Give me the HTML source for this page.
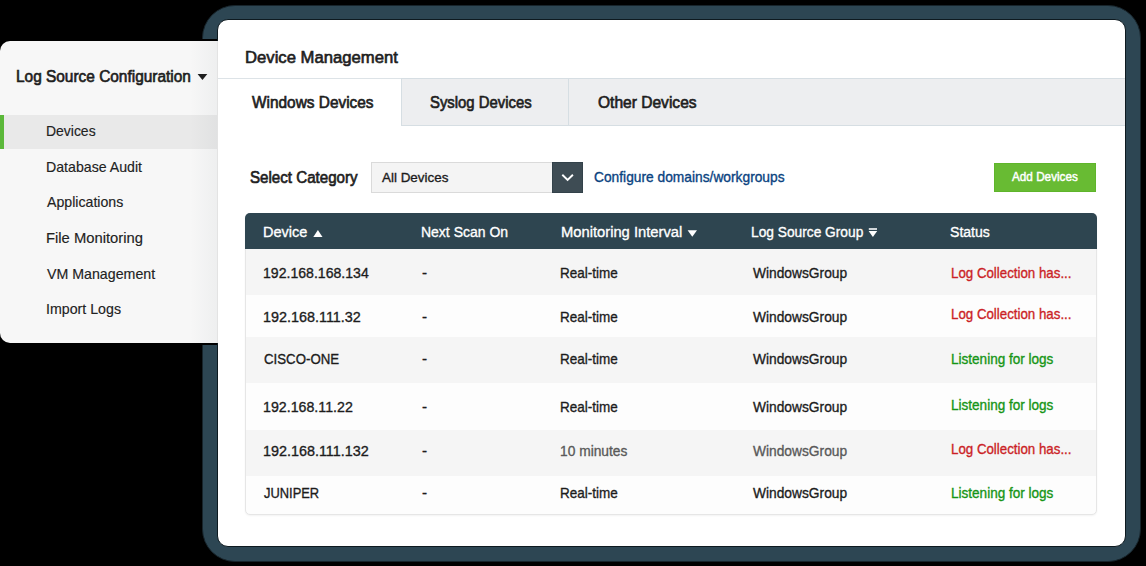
<!DOCTYPE html>
<html><head><meta charset="utf-8"><style>
html,body{margin:0;padding:0;}
body{width:1146px;height:566px;background:#000;position:relative;overflow:hidden;font-family:"Liberation Sans",sans-serif;}
.a{position:absolute;box-sizing:border-box;}
.t{position:absolute;white-space:nowrap;transform-origin:0 0;}

</style></head><body>
<!-- outer frame -->
<div class="a" style="left:202px;top:5px;width:939px;height:557px;background:#2d4653;border-radius:33px;border:1px solid #17242b;"></div>
<!-- sidebar -->
<div class="a" style="left:0;top:41px;width:240px;height:302px;background:#f7f7f7;border-radius:10px 0 0 10px;box-shadow:0 0 0 2px #000;"></div>
<div class="a" style="left:0;top:115px;width:218px;height:34px;background:#e9e9e9;"></div>
<div class="a" style="left:0;top:115px;width:4px;height:34px;background:#5bb83a;"></div>
<!-- panel -->
<div class="a" style="left:217px;top:19px;width:909px;height:528px;background:#fff;border:1px solid #0e1a20;border-radius:11px;"></div>
<div class="a" style="left:190px;top:41px;width:27px;height:302px;background:linear-gradient(90deg,rgba(40,60,70,0) 0%,rgba(40,60,70,.045) 100%);"></div>
<div class="a" style="left:217px;top:41px;width:1px;height:302px;background:#e3e3e3;"></div>
<!-- tabs -->
<div class="a" style="left:218px;top:78px;width:907px;height:1px;background:#dde3e7;"></div>
<div class="a" style="left:401px;top:78px;width:724px;height:48px;background:#edeef0;border-top:1px solid #d6dee3;border-bottom:1px solid #d6dee3;border-left:1px solid #d6dee3;"></div>
<div class="a" style="left:568px;top:79px;width:1px;height:46px;background:#d6dee3;"></div>
<!-- select -->
<div class="a" style="left:371px;top:162px;width:212px;height:31px;background:#f4f4f4;border:1px solid #dadada;"></div>
<div class="a" style="left:552px;top:162px;width:31px;height:31px;background:#3e4c54;border:1px solid #33424a;"></div>
<svg class="a" style="left:552px;top:162px" width="31" height="31"><path d="M10.3 12.8 L15.6 18 L20.9 12.8" fill="none" stroke="#fff" stroke-width="1.9"/></svg>
<!-- add button -->
<div class="a" style="left:994px;top:163px;width:102px;height:29px;background:#68bb33;border:1px solid #5fb52b;"></div>
<!-- table -->
<div class="a" style="left:245px;top:213px;width:852px;height:302px;background:#fdfdfd;border:1px solid #e6e6e6;border-radius:5px;box-shadow:0 1px 2px rgba(0,0,0,.05);"></div>
<div class="a" style="left:245px;top:213px;width:852px;height:36px;background:#2e4550;border-radius:5px 5px 0 0;"></div>
<div class="a" style="left:246px;top:249px;width:850px;height:46px;background:#f5f5f5;"></div>
<div class="a" style="left:246px;top:337px;width:850px;height:46px;background:#f5f5f5;"></div>
<div class="a" style="left:246px;top:430px;width:850px;height:46px;background:#f5f5f5;"></div>
<!-- icons -->
<svg class="a" style="left:0;top:0" width="1146" height="566">
<path d="M313.3 237 L317.9 229.9 L322.5 237 Z" fill="#fff"/>
<path d="M687.6 230.2 L692.3 236.8 L697 230.2 Z" fill="#fff"/>
<rect x="868.8" y="228" width="8.2" height="2" fill="#d0d6d9"/>
<path d="M868.6 231 L872.9 237 L877.2 231 Z" fill="#fff"/>
<path d="M197.6 74 L202.45 80 L207.3 74 Z" fill="#1e1e1e"/>
</svg>

<div class="t" style="left:16.07px;top:69.45px;font-size:16px;line-height:16px;font-weight:normal;color:#1e1e1e;transform:scaleX(0.9637);-webkit-text-stroke:0.65px currentColor;">Log Source Configuration</div>
<div class="t" style="left:45.98px;top:123.64px;font-size:14.6px;line-height:14.6px;font-weight:normal;color:#222222;transform:scaleX(0.9557);-webkit-text-stroke:0.15px currentColor;">Devices</div>
<div class="t" style="left:45.97px;top:159.64px;font-size:14.6px;line-height:14.6px;font-weight:normal;color:#222222;transform:scaleX(0.9701);-webkit-text-stroke:0.15px currentColor;">Database Audit</div>
<div class="t" style="left:47.10px;top:194.64px;font-size:14.6px;line-height:14.6px;font-weight:normal;color:#222222;transform:scaleX(0.9699);-webkit-text-stroke:0.15px currentColor;">Applications</div>
<div class="t" style="left:45.92px;top:230.64px;font-size:14.6px;line-height:14.6px;font-weight:normal;color:#222222;transform:scaleX(1.0125);-webkit-text-stroke:0.15px currentColor;">File Monitoring</div>
<div class="t" style="left:47.10px;top:266.64px;font-size:14.6px;line-height:14.6px;font-weight:normal;color:#222222;transform:scaleX(0.9729);-webkit-text-stroke:0.15px currentColor;">VM Management</div>
<div class="t" style="left:45.82px;top:301.64px;font-size:14.6px;line-height:14.6px;font-weight:normal;color:#222222;transform:scaleX(0.9730);-webkit-text-stroke:0.15px currentColor;">Import Logs</div>
<div class="t" style="left:245.37px;top:48.61px;font-size:17px;line-height:17px;font-weight:normal;color:#1e1e1e;transform:scaleX(0.9804);-webkit-text-stroke:0.65px currentColor;">Device Management</div>
<div class="t" style="left:251.50px;top:94.62px;font-size:15.8px;line-height:15.8px;font-weight:normal;color:#1e1e1e;transform:scaleX(0.9751);-webkit-text-stroke:0.65px currentColor;">Windows Devices</div>
<div class="t" style="left:429.56px;top:94.62px;font-size:15.8px;line-height:15.8px;font-weight:normal;color:#1e1e1e;transform:scaleX(0.9414);-webkit-text-stroke:0.65px currentColor;">Syslog Devices</div>
<div class="t" style="left:598.08px;top:94.62px;font-size:15.8px;line-height:15.8px;font-weight:normal;color:#1e1e1e;transform:scaleX(0.9848);-webkit-text-stroke:0.65px currentColor;">Other Devices</div>
<div class="t" style="left:250.14px;top:169.62px;font-size:15.8px;line-height:15.8px;font-weight:normal;color:#1e1e1e;transform:scaleX(0.9574);-webkit-text-stroke:0.65px currentColor;">Select Category</div>
<div class="t" style="left:382.00px;top:170.57px;font-size:13.5px;line-height:13.5px;font-weight:normal;color:#1c1c1c;transform:scaleX(0.9942);-webkit-text-stroke:0.35px currentColor;">All Devices</div>
<div class="t" style="left:594.31px;top:169.89px;font-size:14.3px;line-height:14.3px;font-weight:normal;color:#0a437f;transform:scaleX(0.9631);-webkit-text-stroke:0.35px currentColor;">Configure domains/workgroups</div>
<div class="t" style="left:1011.80px;top:171.33px;font-size:12.6px;line-height:12.6px;font-weight:normal;color:#ffffff;transform:scaleX(0.9316);-webkit-text-stroke:0.45px currentColor;">Add Devices</div>
<div class="t" style="left:263.14px;top:223.88px;font-size:15.5px;line-height:15.5px;font-weight:normal;color:#ffffff;transform:scaleX(0.9358);-webkit-text-stroke:0.35px currentColor;">Device</div>
<div class="t" style="left:421.38px;top:223.88px;font-size:15.5px;line-height:15.5px;font-weight:normal;color:#ffffff;transform:scaleX(0.9020);-webkit-text-stroke:0.35px currentColor;">Next Scan On</div>
<div class="t" style="left:560.62px;top:223.88px;font-size:15.5px;line-height:15.5px;font-weight:normal;color:#ffffff;transform:scaleX(0.9510);-webkit-text-stroke:0.35px currentColor;">Monitoring Interval</div>
<div class="t" style="left:750.80px;top:223.88px;font-size:15.5px;line-height:15.5px;font-weight:normal;color:#ffffff;transform:scaleX(0.8864);-webkit-text-stroke:0.35px currentColor;">Log Source Group</div>
<div class="t" style="left:950.40px;top:223.88px;font-size:15.5px;line-height:15.5px;font-weight:normal;color:#ffffff;transform:scaleX(0.9079);-webkit-text-stroke:0.35px currentColor;">Status</div>
<div class="t" style="left:263.21px;top:265.30px;font-size:15px;line-height:15px;font-weight:normal;color:#1c1c1c;transform:scaleX(0.9393);-webkit-text-stroke:0.35px currentColor;">192.168.168.134</div>
<div class="t" style="left:422.39px;top:265.30px;font-size:15px;line-height:15px;font-weight:normal;color:#1c1c1c;transform:scaleX(1.0133);-webkit-text-stroke:0.35px currentColor;">-</div>
<div class="t" style="left:559.72px;top:265.30px;font-size:15px;line-height:15px;font-weight:normal;color:#1c1c1c;transform:scaleX(0.8990);-webkit-text-stroke:0.35px currentColor;">Real-time</div>
<div class="t" style="left:752.60px;top:265.30px;font-size:15px;line-height:15px;font-weight:normal;color:#1c1c1c;transform:scaleX(0.9176);-webkit-text-stroke:0.35px currentColor;">WindowsGroup</div>
<div class="t" style="left:951.24px;top:265.30px;font-size:15px;line-height:15px;font-weight:normal;color:#cb1f26;transform:scaleX(0.8864);-webkit-text-stroke:0.35px currentColor;">Log Collection has...</div>
<div class="t" style="left:263.19px;top:309.30px;font-size:15px;line-height:15px;font-weight:normal;color:#1c1c1c;transform:scaleX(0.9586);-webkit-text-stroke:0.35px currentColor;">192.168.111.32</div>
<div class="t" style="left:422.39px;top:309.30px;font-size:15px;line-height:15px;font-weight:normal;color:#1c1c1c;transform:scaleX(1.0133);-webkit-text-stroke:0.35px currentColor;">-</div>
<div class="t" style="left:559.72px;top:309.30px;font-size:15px;line-height:15px;font-weight:normal;color:#1c1c1c;transform:scaleX(0.8990);-webkit-text-stroke:0.35px currentColor;">Real-time</div>
<div class="t" style="left:752.60px;top:309.30px;font-size:15px;line-height:15px;font-weight:normal;color:#1c1c1c;transform:scaleX(0.9176);-webkit-text-stroke:0.35px currentColor;">WindowsGroup</div>
<div class="t" style="left:951.24px;top:306.30px;font-size:15px;line-height:15px;font-weight:normal;color:#cb1f26;transform:scaleX(0.8864);-webkit-text-stroke:0.35px currentColor;">Log Collection has...</div>
<div class="t" style="left:263.54px;top:351.30px;font-size:15px;line-height:15px;font-weight:normal;color:#1c1c1c;transform:scaleX(0.8841);-webkit-text-stroke:0.35px currentColor;">CISCO-ONE</div>
<div class="t" style="left:422.39px;top:351.30px;font-size:15px;line-height:15px;font-weight:normal;color:#1c1c1c;transform:scaleX(1.0133);-webkit-text-stroke:0.35px currentColor;">-</div>
<div class="t" style="left:559.72px;top:351.30px;font-size:15px;line-height:15px;font-weight:normal;color:#1c1c1c;transform:scaleX(0.8990);-webkit-text-stroke:0.35px currentColor;">Real-time</div>
<div class="t" style="left:752.60px;top:351.30px;font-size:15px;line-height:15px;font-weight:normal;color:#1c1c1c;transform:scaleX(0.9176);-webkit-text-stroke:0.35px currentColor;">WindowsGroup</div>
<div class="t" style="left:951.22px;top:351.30px;font-size:15px;line-height:15px;font-weight:normal;color:#159515;transform:scaleX(0.9029);-webkit-text-stroke:0.35px currentColor;">Listening for logs</div>
<div class="t" style="left:263.21px;top:399.30px;font-size:15px;line-height:15px;font-weight:normal;color:#1c1c1c;transform:scaleX(0.9473);-webkit-text-stroke:0.35px currentColor;">192.168.11.22</div>
<div class="t" style="left:422.39px;top:399.30px;font-size:15px;line-height:15px;font-weight:normal;color:#1c1c1c;transform:scaleX(1.0133);-webkit-text-stroke:0.35px currentColor;">-</div>
<div class="t" style="left:559.72px;top:399.30px;font-size:15px;line-height:15px;font-weight:normal;color:#1c1c1c;transform:scaleX(0.8990);-webkit-text-stroke:0.35px currentColor;">Real-time</div>
<div class="t" style="left:752.60px;top:399.30px;font-size:15px;line-height:15px;font-weight:normal;color:#1c1c1c;transform:scaleX(0.9176);-webkit-text-stroke:0.35px currentColor;">WindowsGroup</div>
<div class="t" style="left:951.22px;top:397.30px;font-size:15px;line-height:15px;font-weight:normal;color:#159515;transform:scaleX(0.9029);-webkit-text-stroke:0.35px currentColor;">Listening for logs</div>
<div class="t" style="left:263.19px;top:443.30px;font-size:15px;line-height:15px;font-weight:normal;color:#1c1c1c;transform:scaleX(0.9576);-webkit-text-stroke:0.35px currentColor;">192.168.111.132</div>
<div class="t" style="left:422.39px;top:443.30px;font-size:15px;line-height:15px;font-weight:normal;color:#1c1c1c;transform:scaleX(1.0133);-webkit-text-stroke:0.35px currentColor;">-</div>
<div class="t" style="left:559.84px;top:443.30px;font-size:15px;line-height:15px;font-weight:normal;color:#595959;transform:scaleX(0.9186);-webkit-text-stroke:0.35px currentColor;">10 minutes</div>
<div class="t" style="left:752.60px;top:443.30px;font-size:15px;line-height:15px;font-weight:normal;color:#595959;transform:scaleX(0.9176);-webkit-text-stroke:0.35px currentColor;">WindowsGroup</div>
<div class="t" style="left:951.24px;top:441.30px;font-size:15px;line-height:15px;font-weight:normal;color:#cb1f26;transform:scaleX(0.8864);-webkit-text-stroke:0.35px currentColor;">Log Collection has...</div>
<div class="t" style="left:264.07px;top:485.30px;font-size:15px;line-height:15px;font-weight:normal;color:#1c1c1c;transform:scaleX(0.8594);-webkit-text-stroke:0.35px currentColor;">JUNIPER</div>
<div class="t" style="left:422.39px;top:485.30px;font-size:15px;line-height:15px;font-weight:normal;color:#1c1c1c;transform:scaleX(1.0133);-webkit-text-stroke:0.35px currentColor;">-</div>
<div class="t" style="left:559.72px;top:485.30px;font-size:15px;line-height:15px;font-weight:normal;color:#1c1c1c;transform:scaleX(0.8990);-webkit-text-stroke:0.35px currentColor;">Real-time</div>
<div class="t" style="left:752.60px;top:485.30px;font-size:15px;line-height:15px;font-weight:normal;color:#1c1c1c;transform:scaleX(0.9176);-webkit-text-stroke:0.35px currentColor;">WindowsGroup</div>
<div class="t" style="left:951.22px;top:485.30px;font-size:15px;line-height:15px;font-weight:normal;color:#159515;transform:scaleX(0.9029);-webkit-text-stroke:0.35px currentColor;">Listening for logs</div>
</body></html>
